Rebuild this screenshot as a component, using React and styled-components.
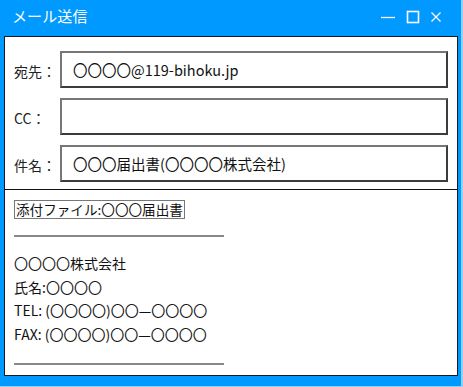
import React from "react";
import styled, { createGlobalStyle } from "styled-components";

const GlobalStyle = createGlobalStyle`
  html, body {
    margin: 0;
    padding: 0;
    background: #8fd0ff;
  }
  body {
    font-family: "Noto Sans CJK JP", "Noto Sans", sans-serif;
  }
`;

const fields = [
  { label: "宛先：", value: "〇〇〇〇@119-bihoku.jp" },
  { label: "CC：", value: "" },
  { label: "件名：", value: "〇〇〇届出書(〇〇〇〇株式会社)" },
];

const signature = [
  "〇〇〇〇株式会社",
  "氏名:〇〇〇〇",
  "TEL: (〇〇〇〇)〇〇—〇〇〇〇",
  "FAX: (〇〇〇〇)〇〇—〇〇〇〇",
];

export default function App() {
  return (
    <>
      <GlobalStyle />
      <Window>
        <TitleBar>
          <Title>メール送信</Title>
          <Controls>
            <svg width="16" height="16" viewBox="0 0 16 16">
              <line x1="1" y1="8.5" x2="15" y2="8.5" stroke="#fff" strokeWidth="1.3" />
            </svg>
            <svg width="14" height="14" viewBox="0 0 14 14">
              <rect x="1.5" y="1.5" width="11" height="11" fill="none" stroke="#fff" strokeWidth="1.6" />
            </svg>
            <svg width="12" height="12" viewBox="0 0 12 12">
              <path d="M1.5 1.5 L10.5 10.5 M10.5 1.5 L1.5 10.5" stroke="#fff" strokeWidth="1.3" />
            </svg>
          </Controls>
        </TitleBar>
        <Panel>
          <Fields>
            {fields.map((f) => (
              <FieldRow key={f.label}>
                <Label>{f.label}</Label>
                <Input>{f.value}</Input>
              </FieldRow>
            ))}
          </Fields>
          <Body>
            <Attachment>添付ファイル:〇〇〇届出書</Attachment>
            <Rule />
            <Signature>
              {signature.map((line) => (
                <SigLine key={line}>{line}</SigLine>
              ))}
            </Signature>
            <Rule $bottom />
          </Body>
        </Panel>
      </Window>
    </>
  );
}

const Window = styled.div`
  width: 461px;
  height: 386px;
  background: #0099ff;
  display: flex;
  flex-direction: column;
  box-sizing: border-box;
  padding: 0 3px 10px 4px;
`;

const TitleBar = styled.div`
  height: 36px;
  flex-shrink: 0;
  display: flex;
  align-items: center;
  justify-content: space-between;
  padding: 0 16px 6px 8px;
  box-sizing: border-box;
  color: #fff;
`;

const Title = styled.div`
  font-size: 15px;
  letter-spacing: 0.1px;
`;

const Controls = styled.div`
  display: flex;
  align-items: center;
  gap: 10px;
  padding-top: 4px;
`;

const Panel = styled.div`
  flex: 1;
  background: #fff;
  border: 1.5px solid #1a1a1a;
  display: flex;
  flex-direction: column;
`;

const Fields = styled.div`
  display: flex;
  flex-direction: column;
  gap: 10px;
  padding: 14px 9px 7px 9px;
  border-bottom: 1px solid #111;
`;

const FieldRow = styled.div`
  display: flex;
  align-items: center;
`;

const Label = styled.div`
  width: 46px;
  font-size: 14px;
  color: #222;
  padding-top: 3px;
`;

const Input = styled.div`
  flex: 1;
  height: 37px;
  box-sizing: border-box;
  border: 2px solid #777;
  border-right-color: #3c3c3c;
  border-bottom-color: #3c3c3c;
  padding: 0 11px;
  display: flex;
  align-items: center;
  font-size: 14.5px;
  color: #111;
`;

const Body = styled.div`
  padding: 10px 9px 0 9px;
  display: flex;
  flex-direction: column;
  align-items: flex-start;
`;

const Attachment = styled.div`
  border: 1px solid #777;
  font-size: 13.6px;
  line-height: 17px;
  padding: 0 1px;
  color: #111;
`;

const Rule = styled.div`
  width: 210px;
  height: 2px;
  background: #888;
  margin-top: ${(p) => (p.$bottom ? "16px" : "16px")};
`;

const Signature = styled.div`
  display: flex;
  flex-direction: column;
  padding-top: 15px;
`;

const SigLine = styled.div`
  font-size: 14px;
  line-height: 23.7px;
  color: #111;
`;
